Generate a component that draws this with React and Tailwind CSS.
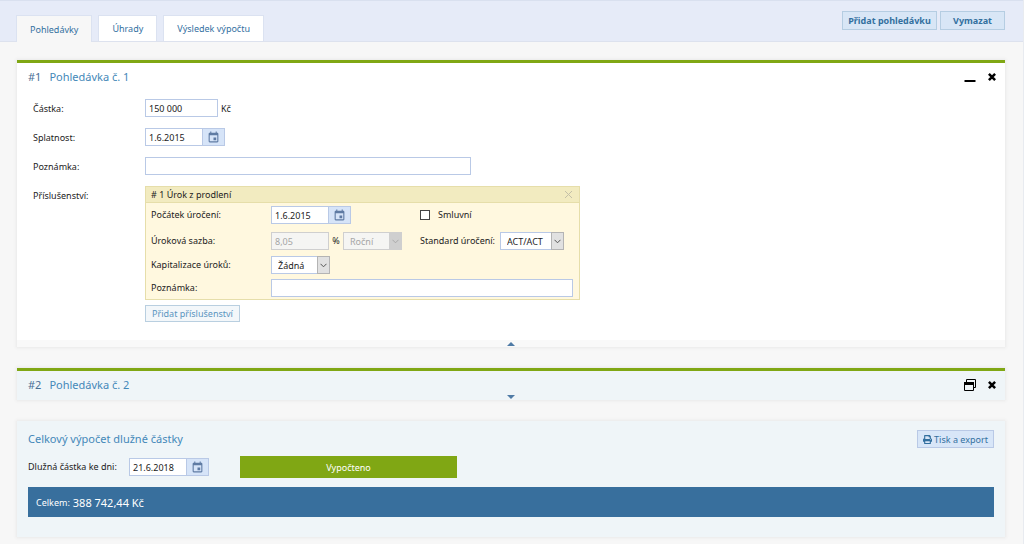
import { useState } from "react";
import { FaPrint } from "react-icons/fa";
import { MdEvent } from "react-icons/md";

const tabs = ["Pohledávky", "Úhrady", "Výsledek výpočtu"];

const TextInput = ({ className = "", ...props }) => (
  <input
    type="text"
    className={`h-[18px] border border-[#b9c9e6] bg-white px-[3px] pt-px text-[#222] disabled:border-[#cfcfcf] disabled:bg-[#f5f5f3] disabled:text-[#a5a5a5] ${className}`}
    {...props}
  />
);

const DateInput = ({ id, value }) => (
  <div className="flex h-[18px]">
    <TextInput id={id} defaultValue={value} className="w-[58px]" />
    <button
      type="button"
      aria-label="Vybrat datum"
      className="flex w-[22px] items-center justify-center border border-l-0 border-[#b9c9e6] bg-[#d6e4f8] text-[#5f7ba3]"
    >
      <MdEvent size={13} />
    </button>
  </div>
);

const Select = ({ id, label, value, disabled, className }) => (
  <div className={`relative h-[18px] ${className}`}>
    <select
      id={id}
      aria-label={label}
      disabled={disabled}
      defaultValue={value}
      className="h-full w-full appearance-none border border-[#b9c9e6] bg-white pt-px pl-1.5 text-[#222] disabled:border-[#cfcfcf] disabled:bg-[#f5f5f3] disabled:text-[#a5a5a5] disabled:opacity-100"
    >
      <option>{value}</option>
    </select>
    <span
      className={`pointer-events-none absolute inset-y-0 right-0 flex w-[13px] items-center justify-center border ${
        disabled
          ? "border-[#cfcfcf] bg-[#cfcfcf] text-[#aaa]"
          : "border-[#b4b4b4] bg-[#e1e1e1] text-[#555]"
      }`}
    >
      <svg width="7" height="5" viewBox="0 0 7 5" fill="none" stroke="currentColor">
        <path d="M0.5 0.8 3.5 3.8 6.5 0.8" />
      </svg>
    </span>
  </div>
);

const CloseIcon = () => (
  <svg width="8" height="8" viewBox="0 0 8 8" stroke="#000" strokeWidth="2.5">
    <path d="M0.9 0.9 7.1 7.1M7.1 0.9 0.9 7.1" />
  </svg>
);

const MinimizeIcon = () => (
  <svg width="12" height="12" viewBox="0 0 12 12">
    <path d="M0.5 9h11v2h-11z" />
  </svg>
);

const RestoreIcon = () => (
  <svg width="12" height="12" viewBox="0 0 12 12" fill="none" stroke="#000">
    <path d="M2.5 3V0.5h9v8H9.5" />
    <path d="M0.5 3.5h9v8h-9z" />
    <path d="M0 3h10v3H0z" fill="#000" stroke="none" />
  </svg>
);

const CardHeader = ({ number, title, collapsed }) => (
  <div className="flex h-7 items-center justify-between pr-[9px] pl-[11px]">
    <h2 className="flex gap-2 text-[11px] text-[#4488b8]">
      <span className="text-[#4a6f96]">#{number}</span>
      {title}
    </h2>
    <div className="flex items-center gap-3">
      <button type="button" aria-label={collapsed ? "Rozbalit" : "Sbalit"}>
        {collapsed ? <RestoreIcon /> : <MinimizeIcon />}
      </button>
      <button type="button" aria-label="Odstranit">
        <CloseIcon />
      </button>
    </div>
  </div>
);

const Row = ({ label, id, children }) => (
  <div className="flex items-start">
    <label htmlFor={id} className="w-28 shrink-0 leading-5">
      {label}
    </label>
    {children}
  </div>
);

const AccessoryRow = ({ label, id, children }) => (
  <div className="flex items-center">
    <label htmlFor={id} className="w-[120px] shrink-0">
      {label}
    </label>
    {children}
  </div>
);

const Accessory = () => (
  <div className="w-[435px] border border-[#e6deaa] bg-[#fff8df]">
    <div className="flex h-4 items-center justify-between border-b border-[#e6deaa] bg-[#f2ebc0] pr-1.5 pl-[5px]">
      <h3>#&nbsp;1 Úrok z prodlení</h3>
      <button type="button" aria-label="Odebrat příslušenství">
        <svg width="9" height="9" viewBox="0 0 9 9" stroke="#c4c0a8">
          <path d="M1 1 8 8M8 1 1 8" />
        </svg>
      </button>
    </div>
    <div className="flex flex-col pt-[3px] pr-1.5 pb-0.5 pl-[5px]">
      <div className="mb-2 flex">
        <div className="w-[269px]">
          <AccessoryRow label="Počátek úročení:" id="start">
            <DateInput id="start" value="1.6.2015" />
          </AccessoryRow>
        </div>
        <label className="flex items-center gap-2">
          <input
            type="checkbox"
            className="size-[10px] appearance-none border border-[#444] bg-white checked:bg-[#444]"
          />
          Smluvní
        </label>
      </div>
      <div className="mb-1.5 flex">
        <div className="w-[269px]">
          <AccessoryRow label="Úroková sazba:" id="rate">
            <TextInput id="rate" defaultValue="8,05" disabled className="w-[58px]" />
            <span className="w-3.5 text-center">%</span>
            <Select label="Období sazby" value="Roční" disabled className="w-[59px]" />
          </AccessoryRow>
        </div>
        <div className="flex items-center">
          <label htmlFor="standard" className="w-20">
            Standard úročení:
          </label>
          <Select id="standard" value="ACT/ACT" className="w-16" />
        </div>
      </div>
      <div className="mb-[5px]">
        <AccessoryRow label="Kapitalizace úroků:" id="capitalization">
          <Select id="capitalization" value="Žádná" className="w-[59px]" />
        </AccessoryRow>
      </div>
      <AccessoryRow label="Poznámka:" id="accessory-note">
        <TextInput id="accessory-note" className="min-w-0 flex-1" />
      </AccessoryRow>
    </div>
  </div>
);

const App = () => {
  const [activeTab, setActiveTab] = useState(tabs[0]);

  return (
    <div className="min-h-screen border-r border-[#e8ebf0] bg-[#f7f7f7] pb-[5px] font-['Noto_Sans','Open_Sans',sans-serif] text-[9px] leading-3 text-[#222]">
      {/* Tabs and actions */}
      <header className="flex h-[42px] items-start justify-between border-t border-b border-t-[#d9e0ef] border-b-[#dde2ee] bg-[#e6ebf8] pr-[18px] pl-4">
        <nav className="flex gap-1.5 pt-3.5">
          {tabs.map((tab) => (
            <button
              key={tab}
              type="button"
              onClick={() => setActiveTab(tab)}
              className={`border border-b-0 border-[#dbe2f1] px-[13px] pt-px text-[#33709f] ${
                tab === activeTab ? "h-[27px] bg-[#f7f7f7]" : "h-[26px] bg-white"
              }`}
            >
              {tab}
            </button>
          ))}
        </nav>
        <div className="flex gap-[3px] pt-2.5">
          <button
            type="button"
            className="h-[19px] w-[95px] border border-[#b5cde2] bg-[#d8e6f6] pt-px font-bold text-[#33709f]"
          >
            Přidat pohledávku
          </button>
          <button
            type="button"
            className="h-[19px] w-[65px] border border-[#b5cde2] bg-[#d8e6f6] pt-px font-bold text-[#33709f]"
          >
            Vymazat
          </button>
        </div>
      </header>

      <main className="flex flex-col gap-[21px] pt-[18px] pr-[18px] pl-[17px]">
        {/* Expanded claim */}
        <section className="border-t-3 border-[#80a714] bg-white shadow-[0_0_3px_1px_#e9e9e9]">
          <CardHeader number={1} title="Pohledávka č. 1" />
          <div className="flex flex-col gap-[9px] pt-2 pb-[18px] pl-4">
            <Row label="Částka:" id="amount">
              <TextInput id="amount" defaultValue="150 000" className="w-[73px]" />
              <span className="pl-[3px] leading-5">Kč</span>
            </Row>
            <Row label="Splatnost:" id="due">
              <DateInput id="due" value="1.6.2015" />
            </Row>
            <Row label="Poznámka:" id="note">
              <TextInput id="note" className="w-[326px]" />
            </Row>
            <div className="flex items-start">
              <span className="w-28 shrink-0 leading-5">Příslušenství:</span>
              <div>
                <Accessory />
                <button
                  type="button"
                  className="mt-[5px] h-[17px] w-[95px] border border-[#b9cfe0] bg-[#f3f7fa] text-[#5a95c0]"
                >
                  Přidat příslušenství
                </button>
              </div>
            </div>
          </div>
          <button
            type="button"
            aria-label="Sbalit pohledávku"
            className="flex h-[7px] w-full items-center justify-center bg-[#f9f9f9]"
          >
            <svg width="8" height="4" viewBox="0 0 8 4" fill="#4f7ba6">
              <path d="M0 4 4 0 8 4z" />
            </svg>
          </button>
        </section>

        {/* Collapsed claim */}
        <section className="border-t-3 border-[#80a714] bg-[#eff5f8] shadow-[0_0_3px_1px_#e9e9e9]">
          <CardHeader number={2} title="Pohledávka č. 2" collapsed />
          <button
            type="button"
            aria-label="Rozbalit pohledávku"
            className="-mt-1.5 flex h-[7px] w-full items-center justify-center"
          >
            <svg width="8" height="4" viewBox="0 0 8 4" fill="#4f7ba6">
              <path d="M0 0 4 4 8 0z" />
            </svg>
          </button>
        </section>

        {/* Total */}
        <section className="bg-[#eff5f8] px-[11px] pt-[9px] pb-5 shadow-[0_0_3px_1px_#e9e9e9]">
          <div className="flex items-center justify-between">
            <h2 className="text-[11px] text-[#4488b8]">Celkový výpočet dlužné částky</h2>
            <button
              type="button"
              className="flex h-[18px] w-[77px] items-center justify-center gap-0.5 border border-[#b9c9e6] bg-[#d8e6f8] pt-px text-[#33709f]"
            >
              <FaPrint size={9} />
              Tisk a export
            </button>
          </div>
          <div className="mt-2 flex items-center">
            <label htmlFor="total-date" className="w-[101px]">
              Dlužná částka ke dni:
            </label>
            <DateInput id="total-date" value="21.6.2018" />
            <button
              type="button"
              className="ml-[31px] h-[22px] w-[217px] bg-[#80a714] pt-px text-white"
            >
              Vypočteno
            </button>
          </div>
          <p className="mt-[9px] flex h-[30px] items-center gap-[3px] bg-[#386f9d] px-2 pt-px text-white">
            Celkem: <span className="text-[11px]">388 742,44 Kč</span>
          </p>
        </section>
      </main>
    </div>
  );
};

export default App;
